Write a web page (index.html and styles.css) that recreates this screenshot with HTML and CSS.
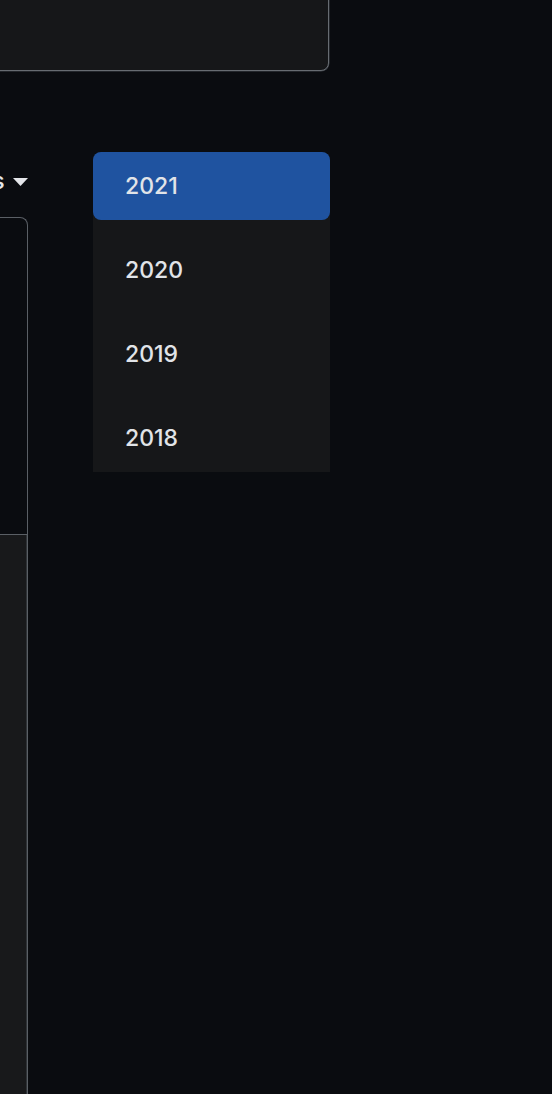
FILE: index.html
```html
<!DOCTYPE html>
<html lang="en">
<head>
<meta charset="utf-8">
<title>Year picker</title>
<link rel="stylesheet" href="styles.css">
</head>
<body>
<div class="page">
  <div class="top-card"></div>
  <div class="toolbar">
    <span class="toolbar-label">Years</span>
    <svg class="caret" width="15" height="8" viewBox="0 0 15 8" aria-hidden="true"><path d="M0 0H15L7.5 8Z" fill="#e4e6ea"/></svg>
  </div>
  <div class="left-card">
    <div class="left-card-upper"></div>
    <div class="left-card-lower"></div>
  </div>
  <ul class="year-menu">
    <li class="year-item is-selected">2021</li>
    <li class="year-item">2020</li>
    <li class="year-item">2019</li>
    <li class="year-item">2018</li>
  </ul>
</div>
</body>
</html>
```

FILE: styles.css
```css
html, body {
  margin: 0;
  padding: 0;
  background: #0a0c10;
  height: 100%;
  overflow: hidden;
}

.page {
  position: relative;
  width: 552px;
  height: 1094px;
  overflow: hidden;
  font-family: Inter, "Liberation Sans", Arial, sans-serif;
  font-weight: 500;
  color: #e4e6ea;
}

.top-card {
  box-sizing: border-box;
  margin: -10px 0 0 -20px;
  width: 349px;
  height: 81px;
  background: #161719;
  border: 1px solid #676c72;
  border-radius: 8px;
  box-shadow: 0 0.5px 0 #3d4146, 0.5px 0 0 #3d4146;
}

.toolbar {
  display: flex;
  align-items: center;
  gap: 8px;
  height: 28px;
  margin: 96px 0 22px -60px;
}

.toolbar-label {
  font-size: 24px;
  line-height: 28px;
}

.caret {
  display: block;
  margin-top: 1px;
}

.left-card {
  box-sizing: border-box;
  margin-left: -20px;
  width: 48px;
  height: 900px;
  border: 1px solid #5a5f65;
  border-bottom: none;
  border-radius: 0 8px 0 0;
  display: flex;
  flex-direction: column;
  overflow: hidden;
}

.left-card-upper {
  height: 316px;
  border-bottom: 1px solid #5a5f65;
}

.left-card-lower {
  flex: 1;
  background: #18191b;
  box-shadow: inset -1px 0 0 #2f3337;
}

.year-menu {
  position: absolute;
  top: 152px;
  left: 93px;
  width: 237px;
  height: 320px;
  margin: 0;
  padding: 0;
  list-style: none;
  background: #161719;
  border-radius: 8px 8px 0 0;
  display: flex;
  flex-direction: column;
  gap: 16px;
}

.year-item {
  height: 68px;
  display: flex;
  align-items: center;
  padding-left: 32px;
  font-size: 23px;
  color: #e1e4e8;
}

.year-item.is-selected {
  background: #1f53a0;
  border-radius: 8px;
}
```
